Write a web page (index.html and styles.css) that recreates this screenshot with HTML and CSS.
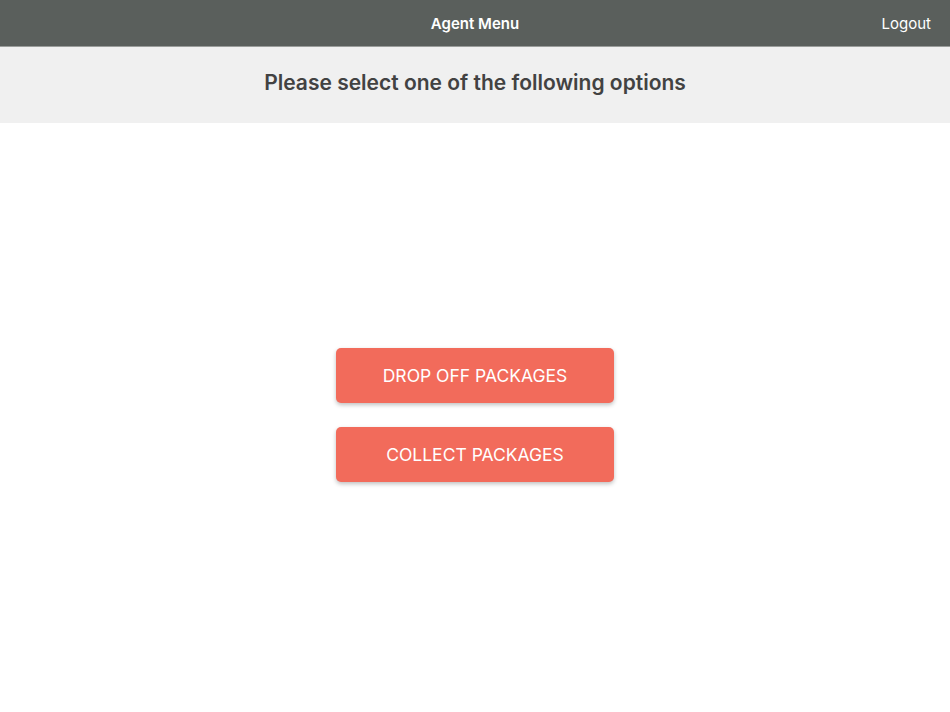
FILE: index.html
```html
<!doctype html>
<html>

<head>
  <title>Agent Menu</title>
  <meta http-equiv="Content-Type" content="text/html; charset=UTF-8">
  <link rel="stylesheet" href="styles.css">
</head>

<body>
  <div class="page">
    <div class="topbar">
      <span class="title">Agent Menu</span>
      <a href="#" class="logout">Logout</a>
    </div>
    <div class="prompt">Please select one of the following options</div>
    <div class="options">
      <a href="#" class="btn">DROP OFF PACKAGES</a>
      <a href="#" class="btn">COLLECT PACKAGES</a>
    </div>
  </div>
</body>

</html>
```

FILE: styles.css
```css
html,
body {
  height: 100%;
  margin: 0;
  background-color: white;
  font-family: 'Inter', 'Noto Sans', sans-serif;
}

.page {
  height: 100%;
  display: flex;
  flex-direction: column;
}

.topbar {
  height: 46px;
  flex: 0 0 46px;
  background-color: #5a5f5c;
  border-bottom: 1px solid #9a9d9b;
  display: flex;
  align-items: center;
  justify-content: center;
  position: relative;
  color: white;
}

.title {
  font-size: 15px;
  font-weight: 600;
}

.logout {
  position: absolute;
  right: 19px;
  top: 14px;
  font-size: 15px;
  color: white;
  text-decoration: none;
}

.prompt {
  height: 76px;
  flex: 0 0 76px;
  background-color: #f0f0f0;
  color: #424242;
  font-size: 21px;
  font-weight: 600;
  text-align: center;
  line-height: 72px;
}

.options {
  flex: 1;
  display: flex;
  flex-direction: column;
  align-items: center;
  justify-content: center;
  gap: 24px;
  padding-bottom: 6px;
}

.btn {
  width: 278px;
  height: 55px;
  display: flex;
  align-items: center;
  justify-content: center;
  background-color: #f26b5b;
  color: white;
  font-size: 17.5px;
  border-radius: 5px;
  text-decoration: none;
  box-shadow: 0 2px 4px rgba(0, 0, 0, .25);
}
```
